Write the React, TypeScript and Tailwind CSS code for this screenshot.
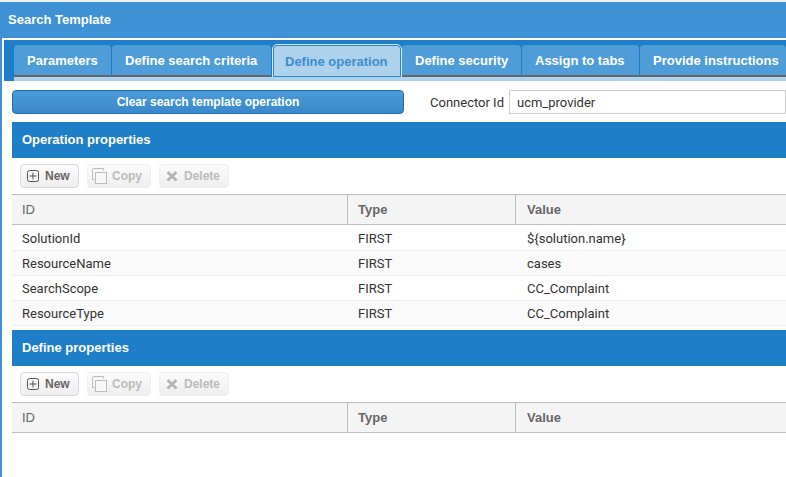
import React from "react";

const tabs = [
  { label: "Parameters", w: "w-[97px]" },
  { label: "Define search criteria", w: "w-[159px]" },
  { label: "Define operation", w: "w-[128px]", active: true },
  { label: "Define security", w: "w-[119px]" },
  { label: "Assign to tabs", w: "w-[117px]" },
  { label: "Provide instructions", w: "w-[146px]" },
];

const arial = { fontFamily: '"Liberation Sans", Arial, sans-serif' };

function PlusIcon() {
  return (
    <svg width="14" height="14" viewBox="0 0 14 14" fill="none" stroke="#555" strokeWidth="1">
      <rect x="1.5" y="1.5" width="11" height="11" rx="2" />
      <path d="M7 3.5v7M3.5 7h7" />
    </svg>
  );
}
function CopyIcon() {
  return (
    <svg width="18" height="18" viewBox="0 0 18 18" fill="none" stroke="#bdbdbd" strokeWidth="1">
      <path d="M12.5 3.5V1.5H2.5a1 1 0 0 0-1 1v10h2" />
      <rect x="4.5" y="5.5" width="11" height="11" fill="#f8f8f8" />
    </svg>
  );
}
function XIcon() {
  return (
    <svg width="12" height="12" viewBox="0 0 12 12" fill="none" stroke="#b5b5b5" strokeWidth="3">
      <path d="M1.5 2l9 8.5M10.5 2l-9 8.5" />
    </svg>
  );
}

function Toolbar() {
  const base =
    "h-6 flex items-center rounded-sm border text-xs font-bold bg-gradient-to-b from-[#fbfbfb] to-[#eeeeee]";
  return (
    <div className="flex gap-2 pl-2 py-1.5 h-9" style={arial}>
      <div className={`${base} w-[59px] pl-[5px] gap-[5px] border-[#d8d8d8] text-[#666]`}>
        <PlusIcon />
        <span>New</span>
      </div>
      <div className={`${base} w-[64px] pl-[3px] gap-[3px] border-[#eeeeee] text-[#bbb]`}>
        <CopyIcon />
        <span>Copy</span>
      </div>
      <div className={`${base} w-[70px] pl-[6px] gap-[6px] border-[#eeeeee] text-[#bbb]`}>
        <XIcon />
        <span>Delete</span>
      </div>
    </div>
  );
}

function HeaderRow() {
  const c = "h-full flex items-center px-[10px] text-[13px] font-bold text-[#666]";
  return (
    <div className="flex h-[31px] bg-[#f4f4f4] border-y border-[#bdbdbd]" style={arial}>
      <div className={`${c} w-[335px] font-normal`}>ID</div>
      <div className={`${c} w-[168px] border-l border-[#bdbdbd]`}>Type</div>
      <div className={`${c} flex-1 border-l border-[#bdbdbd] pl-[11px]`}>Value</div>
    </div>
  );
}

function Row({ id, value, alt }: { id: string; value: string; alt?: boolean }) {
  return (
    <div
      className={`flex h-[25px] items-center pt-[2px] border-b border-[#eeeeee] text-[13px] text-[#333] ${
        alt ? "bg-[#fafafa]" : "bg-white"
      }`}
    >
      <div className="w-[336px] px-[10px]">{id}</div>
      <div className="w-[168px] pl-[10px]">FIRST</div>
      <div className="flex-1 pl-[11px]">{value}</div>
    </div>
  );
}

function SectionHeader({ title }: { title: string }) {
  return (
    <div
      className="h-9 flex items-center pl-[10px] bg-[#1e7ec8] text-white text-[13px] font-bold"
      style={arial}
    >
      {title}
    </div>
  );
}

export default function App() {
  return (
    <div
      className="w-[786px] h-[477px] overflow-hidden flex flex-col bg-white"
      style={{ fontFamily: 'Roboto, "Liberation Sans", Arial, sans-serif' }}
    >
      <div className="h-[2px] bg-[#e9f2fa] shrink-0" />
      <div
        className="h-9 shrink-0 flex items-center pl-2 bg-[#3d91d4] text-white text-[13px] font-bold"
        style={arial}
      >
        Search Template
      </div>
      <div className="flex-1 flex bg-white pt-[2px] border-l-2 border-[#3d91d4] min-h-0">
        <div className="flex-1 min-w-0 pl-[2px]">
          <div className="h-[41px] bg-[#1e7ec8] flex flex-col">
            <div className="flex gap-px pl-[10px] pt-[5px] h-[37px]" style={arial}>
              {tabs.map((t) =>
                t.active ? (
                  <div
                    key={t.label}
                    className={`${t.w} ml-px shrink-0 h-[32px] flex items-center pl-[11px] pt-px rounded-t-sm bg-[#aed1ec] border border-[#2b86cc] outline outline-1 outline-[#d5e7f5] text-[#3d8ed0] text-[13px] font-bold`}
                  >
                    {t.label}
                  </div>
                ) : (
                  <div
                    key={t.label}
                    className={`${t.w} shrink-0 h-[32px] flex items-center pl-[13px] pt-px rounded-t-sm bg-[#4f9dd8] border-b-2 border-[#6b6466] text-white text-[13px] font-bold`}
                  >
                    {t.label}
                  </div>
                )
              )}
            </div>
            <div className="h-[4px] ml-[10px] bg-[#aed1ec]" />
          </div>
          <div className="pl-2">
            <div className="flex items-center pt-[9px] pb-2 h-[41px]">
              <div
                className="w-[392px] h-6 flex items-center justify-center rounded-sm border border-[#1f6fb0] bg-gradient-to-b from-[#4a9ad8] to-[#3a88c8] text-white text-xs font-bold"
                style={arial}
              >
                Clear search template operation
              </div>
              <div className="ml-[26px] pt-px text-[13px] text-[#333] w-[79px]">Connector Id</div>
              <div className="flex-1 h-6 flex items-center pl-[7px] pt-px border border-[#cccccc] text-[13px] text-[#333] bg-white">
                ucm_provider
              </div>
            </div>
            <SectionHeader title="Operation properties" />
            <Toolbar />
            <HeaderRow />
            <div className="h-px" />
            <Row id="SolutionId" value="${solution.name}" />
            <Row id="ResourceName" value="cases" alt />
            <Row id="SearchScope" value="CC_Complaint" />
            <Row id="ResourceType" value="CC_Complaint" alt />
            <div className="h-[4px]" />
            <SectionHeader title="Define properties" />
            <Toolbar />
            <HeaderRow />
          </div>
        </div>
      </div>
    </div>
  );
}
